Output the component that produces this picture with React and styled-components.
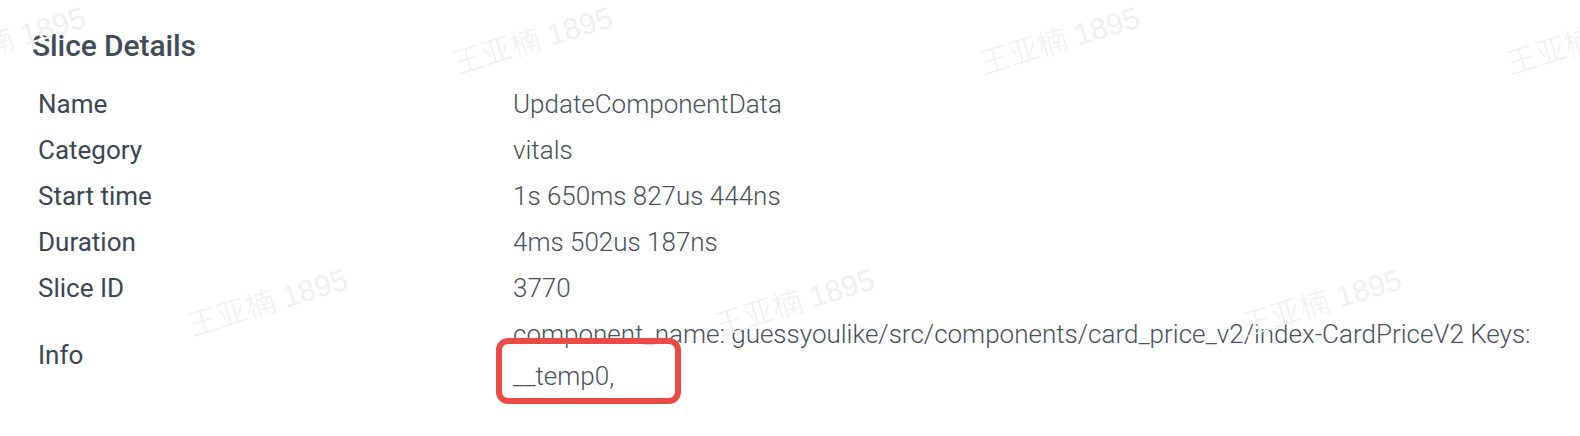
import React from "react";
import styled, { createGlobalStyle } from "styled-components";

const Global = createGlobalStyle`
  html, body { margin: 0; padding: 0; background: #ffffff; }
  body { font-family: Roboto, "Noto Sans", sans-serif; }
`;

const Page = styled.div`
  position: relative;
  width: 1580px;
  height: 436px;
  overflow: hidden;
  background: #ffffff;
`;

const Panel = styled.section`
  display: flex;
  flex-direction: column;
  padding: 26px 0 0 32px;
`;

const Title = styled.h2`
  margin: 0;
  font-family: Roboto, sans-serif;
  font-size: 30px;
  font-weight: 500;
  line-height: 40px;
  color: #414c58;
  letter-spacing: -0.1px;
`;

const Details = styled.div`
  display: grid;
  grid-template-columns: 475px 1070px;
  margin-top: 15px;
  margin-left: 6px;
`;

const Label = styled.div`
  display: flex;
  align-items: center;
  padding: 2px 0;
  font-size: 26px;
  line-height: 42px;
  font-weight: 400;
  color: #3b4652;
`;

const Value = styled.div`
  position: relative;
  display: flex;
  align-items: center;
  padding: 2px 0;
  font-size: 26px;
  line-height: 42px;
  font-weight: 300;
  color: #48515a;
`;

const Highlight = styled.div`
  position: absolute;
  left: -17px;
  top: 27px;
  width: 185px;
  height: 66px;
  box-sizing: border-box;
  border: 6px solid #eb4a45;
  border-radius: 12px;
  pointer-events: none;
`;

const WatermarkLayer = styled.div`
  position: absolute;
  inset: 0;
  pointer-events: none;
`;

const Mark = styled.span`
  position: absolute;
  left: ${(p) => p.$x}px;
  top: ${(p) => p.$y}px;
  transform: translate(-50%, -50%) rotate(-17deg);
  font-family: "Liberation Sans", "Noto Sans CJK SC", sans-serif;
  font-size: 30px;
  font-weight: 300;
  color: #efefef;
  white-space: nowrap;
`;

const rows = [
  ["Name", "UpdateComponentData"],
  ["Category", "vitals"],
  ["Start time", "1s 650ms 827us 444ns"],
  ["Duration", "4ms 502us 187ns"],
  ["Slice ID", "3770"],
];

const marks = [];
for (let r = -1; r < 3; r++) {
  for (let c = -1; c < 5; c++) {
    const x = 5 + c * 527 + r * 262;
    const y = 38 + r * 262;
    if (x > -120 && x < 1700 && y > -60 && y < 500) marks.push({ x, y });
  }
}

export default function App() {
  return (
    <Page>
      <Global />
      <Panel>
        <Title>Slice Details</Title>
        <Details>
          {rows.map(([k, v]) => (
            <React.Fragment key={k}>
              <Label>{k}</Label>
              <Value>{v}</Value>
            </React.Fragment>
          ))}
          <Label>Info</Label>
          <Value>
            <span>
              component_name: guessyoulike/src/components/card_price_v2/index-CardPriceV2 Keys: __temp0,
            </span>
            <Highlight />
          </Value>
        </Details>
      </Panel>
      <WatermarkLayer>
        {marks.map((m, i) => (
          <Mark key={i} $x={m.x} $y={m.y}>
            王亚楠 1895
          </Mark>
        ))}
      </WatermarkLayer>
    </Page>
  );
}
